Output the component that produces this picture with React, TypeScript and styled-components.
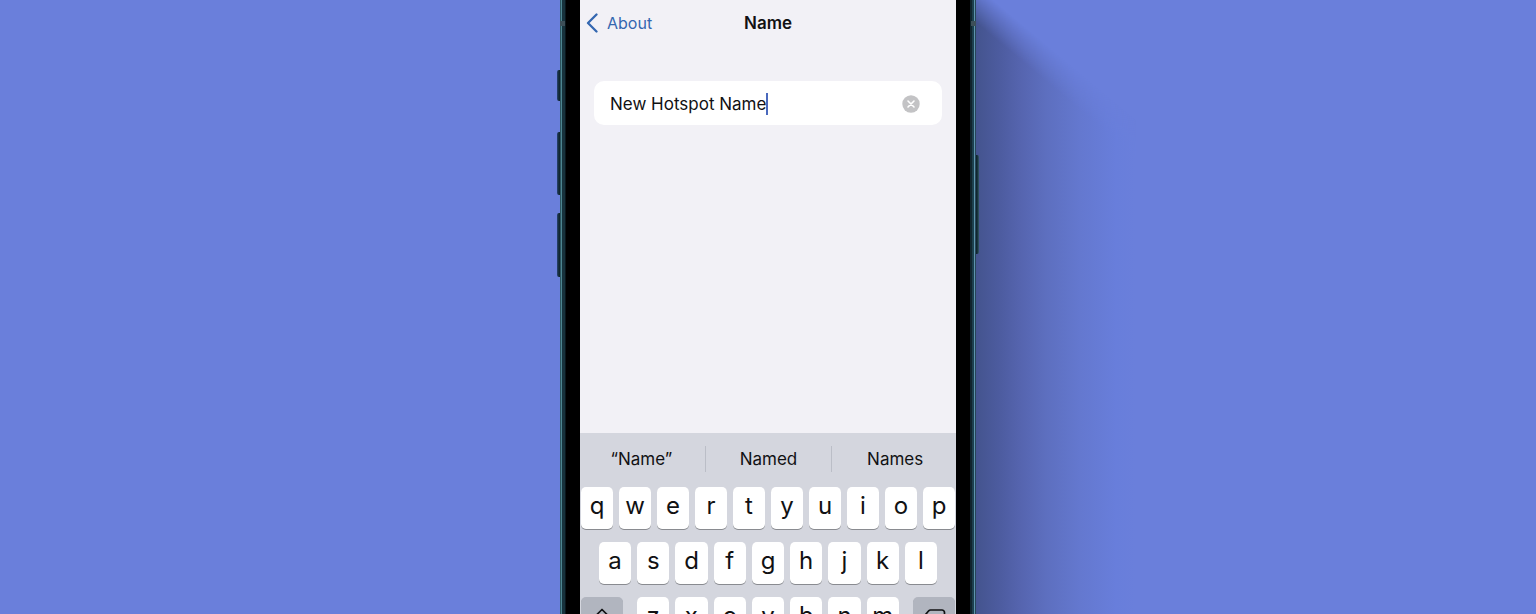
import React, { useState } from 'react';
import styled, { createGlobalStyle } from 'styled-components';

const GlobalStyle = createGlobalStyle`
  *, *::before, *::after { box-sizing: border-box; }
  body {
    margin: 0;
    background: #6a7fdb;
    font-family: Inter, "Liberation Sans", sans-serif;
    color: #111113;
  }
  button, input { font: inherit; color: inherit; margin: 0; padding: 0; border: 0; }
  button { cursor: pointer; }
`;

const Stage = styled.main`
  display: flex;
  justify-content: center;
  align-items: flex-start;
  height: 100vh;
  overflow: hidden;
  background: #6a7fdb;
`;

const Phone = styled.div`
  position: relative;
  flex: none;
  width: 416px;
  padding: 0 20px;
  background: linear-gradient(
    90deg,
    #2c545e 0 1px, #4d8590 1px 2px, #17323c 2px 5px, #0a161c 5px 6px, #000 6px 410px,
    #10242c 410px 412px, #1c3f4d 412px 414px, #5c94ac 414px 415px, #274558 415px
  );
`;

const CastShadow = styled.div`
  position: absolute;
  top: 0;
  left: 100%;
  width: 160px;
  height: 100vh;
  background: linear-gradient(
    90deg,
    #44548e 0, #4c5b9e 22px, #5665b0 46px, #5d6fbf 70px, #6478cf 104px, #687edb 140px, #6a7fdb 160px
  );
  mask-image: linear-gradient(220deg, transparent 92px, #000 120px);
`;

const SideButton = styled.span<{ $side: 'left' | 'right'; $top: number; $length: number }>`
  position: absolute;
  top: ${({ $top }) => $top}px;
  ${({ $side }) => ($side === 'left' ? 'right' : 'left')}: 100%;
  width: 3px;
  height: ${({ $length }) => $length}px;
  border-radius: ${({ $side }) => ($side === 'left' ? '2px 0 0 2px' : '0 2px 2px 0')};
  background: ${({ $side }) =>
    $side === 'left'
      ? 'linear-gradient(90deg, #2a4674, #10262f 2px)'
      : 'linear-gradient(90deg, #10262f 1px, #345a68)'};
`;

const Antenna = styled.span<{ $side: 'left' | 'right' }>`
  position: absolute;
  top: 21px;
  ${({ $side }) => $side}: 0;
  width: 5px;
  height: 5px;
  background: #3d4f58;
`;

const Screen = styled.div`
  display: flex;
  flex-direction: column;
  overflow: hidden;
  background: #f2f1f6;
`;

const NavBar = styled.header`
  display: grid;
  grid-template-columns: 1fr auto 1fr;
  align-items: center;
  height: 46px;
  padding: 0 6px;
`;

const BackLink = styled.a`
  display: flex;
  align-items: center;
  gap: 8px;
  color: #3467b0;
  font-size: 16px;
  line-height: 20px;
  text-decoration: none;
`;

const Title = styled.h1`
  margin: 0;
  font-size: 17px;
  line-height: 20px;
  font-weight: 600;
`;

const Content = styled.section`
  min-height: 387px;
  padding: 35px 14px;
`;

const Field = styled.div`
  display: flex;
  align-items: center;
  height: 44px;
  padding: 2px 22px 0 16px;
  border-radius: 10px;
  background: #fff;
`;

const NameInput = styled.input`
  field-sizing: content;
  max-width: 260px;
  height: 24px;
  background: transparent;
  outline: none;
  caret-color: transparent;
  font-size: 17px;
  line-height: 24px;
`;

const Caret = styled.span`
  width: 2px;
  height: 22px;
  background: #4a69bd;
`;

const ClearButton = styled.button`
  display: flex;
  margin-left: auto;
  border-radius: 50%;
  background: transparent;
`;

const Keyboard = styled.section`
  background: #d4d6de;
  padding-bottom: 80px;
`;

const Suggestions = styled.div`
  display: grid;
  grid-template-columns: repeat(3, 1fr);
  align-items: center;
  height: 54px;
  margin: 0 -2px;
  padding-bottom: 2px;
`;

const Suggestion = styled.button`
  height: 26px;
  background: transparent;
  font-size: 17px;
  line-height: 24px;
  & + & { border-left: 1px solid #bbbec7; }
`;

const KeyRow = styled.div<{ $inset: number }>`
  display: flex;
  gap: 6px;
  padding: 0 ${({ $inset }) => $inset}px;
  & + & { margin-top: 13px; }
`;

const Key = styled.button`
  flex: 1 1 0;
  min-width: 0;
  height: 42px;
  padding-bottom: 4px;
  border-radius: 5px;
  background: #fff;
  box-shadow: 0 1px 0 #898b90;
  font-size: 24px;
  line-height: 38px;
`;

const ActionKey = styled.button<{ $edge: 'start' | 'end' }>`
  display: flex;
  align-items: center;
  justify-content: center;
  flex: none;
  width: 42px;
  height: 42px;
  ${({ $edge }) => ($edge === 'start' ? 'margin-right' : 'margin-left')}: 8px;
  border-radius: 5px;
  background: #b1b5bf;
  box-shadow: 0 1px 0 #898b90;
`;

const BackIcon = () => (
  <svg width="13" height="20" viewBox="0 0 13 20" fill="none" aria-hidden="true">
    <path d="M10.5 1.5 2 10l8.500 8.500" stroke="#3467b0" strokeWidth="2.300" strokeLinecap="round" strokeLinejoin="round" />
  </svg>
);

const ClearIcon = () => (
  <svg width="18" height="18" viewBox="0 0 18 18" aria-hidden="true">
    <circle cx="9" cy="9" r="8.700" fill="#c3c3c5" />
    <path d="m6 6 6 6m0-6-6 6" stroke="#fff" strokeWidth="1.600" strokeLinecap="round" />
  </svg>
);

const ShiftIcon = () => (
  <svg width="22" height="20" viewBox="0 0 22 20" fill="none" aria-hidden="true">
    <path d="M11 1.500 2 10.500h4.500v7.500h9v-7.500H20z" stroke="#111113" strokeWidth="1.700" strokeLinejoin="round" />
  </svg>
);

const DeleteIcon = () => (
  <svg width="24" height="18" viewBox="0 0 24 18" fill="none" aria-hidden="true">
    <path
      d="M8.500 1h11.500a2.500 2.500 0 0 1 2.500 2.500v11a2.500 2.500 0 0 1-2.500 2.500H8.500a2.500 2.500 0 0 1-1.800-.8L1.500 10a1.500 1.500 0 0 1 0-2l5.200-6.200A2.500 2.500 0 0 1 8.500 1z"
      stroke="#111113"
      strokeWidth="1.700"
    />
    <path d="m11 6 6 6m0-6-6 6" stroke="#111113" strokeWidth="1.700" strokeLinecap="round" />
  </svg>
);

const suggestions = ['“Name”', 'Named', 'Names'];

export default function App() {
  const [name, setName] = useState('New Hotspot Name');
  const type = (letter: string) => setName((value) => value + letter);
  const renderKeys = (letters: string) =>
    letters.split('').map((letter) => (
      <Key key={letter} type="button" onClick={() => type(letter)}>
        {letter}
      </Key>
    ));

  return (
    <Stage>
      <GlobalStyle />
      <Phone>
        <CastShadow />
        <SideButton $side="left" $top={70} $length={31} />
        <SideButton $side="left" $top={132} $length={63} />
        <SideButton $side="left" $top={213} $length={64} />
        <SideButton $side="right" $top={155} $length={99} />
        <Antenna $side="left" />
        <Antenna $side="right" />
        <Screen>
          <NavBar>
            <BackLink href="#about">
              <BackIcon />
              About
            </BackLink>
            <Title>Name</Title>
          </NavBar>
          <Content>
            <Field>
              <NameInput
                type="text"
                aria-label="Name"
                value={name}
                onChange={(event) => setName(event.target.value)}
              />
              <Caret />
              <ClearButton type="button" aria-label="Clear text" onClick={() => setName('')}>
                <ClearIcon />
              </ClearButton>
            </Field>
          </Content>
          <Keyboard aria-label="Keyboard">
            <Suggestions>
              {suggestions.map((word) => (
                <Suggestion key={word} type="button">
                  {word}
                </Suggestion>
              ))}
            </Suggestions>
            <KeyRow $inset={1}>{renderKeys('qwertyuiop')}</KeyRow>
            <KeyRow $inset={19}>{renderKeys('asdfghjkl')}</KeyRow>
            <KeyRow $inset={1}>
              <ActionKey type="button" aria-label="Shift" $edge="start">
                <ShiftIcon />
              </ActionKey>
              {renderKeys('zxcvbnm')}
              <ActionKey
                type="button"
                aria-label="Delete"
                $edge="end"
                onClick={() => setName((value) => value.slice(0, -1))}
              >
                <DeleteIcon />
              </ActionKey>
            </KeyRow>
          </Keyboard>
        </Screen>
      </Phone>
    </Stage>
  );
}
